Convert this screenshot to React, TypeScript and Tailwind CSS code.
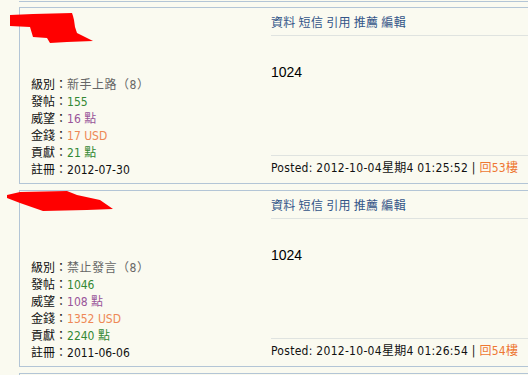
import React from "react";

type Post = {
  level: string;
  posts: string;
  fame: string;
  money: string;
  contrib: string;
  reg: string;
  time: string;
  floor: string;
  blob: string;
};

const posts: Post[] = [
  {
    level: "新手上路（8）",
    posts: "155",
    fame: "16 點",
    money: "17 USD",
    contrib: "21 點",
    reg: "2012-07-30",
    time: "2012-10-04星期4 01:25:52",
    floor: "回53樓",
    blob: "10,8 33,7 72,6 73,9 74,13 75,20 77,26 93,34 67,35 50,36 47,31 33,30 30,20 10,19",
  },
  {
    level: "禁止發言（8）",
    posts: "1046",
    fame: "108 點",
    money: "1352 USD",
    contrib: "2240 點",
    reg: "2011-06-06",
    time: "2012-10-04星期4 01:26:54",
    floor: "回54樓",
    blob: "7,5 20,2 67,1 77,5 100,10 113,19 87,20 43,21 20,13 7,8",
  },
];

const sans = {
  fontFamily: '"DejaVu Sans Condensed", "DejaVu Sans", "Noto Sans CJK TC", sans-serif',
};

function PostBox({ p }: { p: Post }) {
  return (
    <div className="relative ml-[19px] w-[540px] h-[177px] border border-[#b3c5d6] flex">
      <svg
        className="absolute left-[-20px] top-[-1px]"
        width="120"
        height="40"
        viewBox="0 0 120 40"
      >
        <polygon points={p.blob} fill="#ff0000" />
      </svg>
      <div className="w-[251px] pl-[11px] pb-[4px] flex flex-col justify-end text-[12px] leading-[17px] text-[#111]">
        <div>
          級別：<span className="text-[#666] tracking-[0.5px]">{p.level}</span>
        </div>
        <div>
          發帖：<span className="text-[#338833]">{p.posts}</span>
        </div>
        <div>
          威望：<span className="text-[#995599]">{p.fame}</span>
        </div>
        <div>
          金錢：<span className="text-[#ee8855]">{p.money}</span>
        </div>
        <div>
          貢獻：<span className="text-[#338833]">{p.contrib}</span>
        </div>
        <div>註冊：{p.reg}</div>
      </div>
      <div className="flex-1 flex flex-col">
        <div
          className="h-[28px] pt-[5px] border-b border-[#dfe3e0] text-[12px] leading-[17px] tracking-[0.3px] text-[#335588]"
          style={{ fontFamily: '"Noto Sans CJK TC", sans-serif' }}
        >
          資料 短信 引用 推薦 編輯
        </div>
        <div
          className="flex-1 pt-[28px] text-[14px] leading-[17px] text-black"
          style={{ fontFamily: '"Liberation Sans", Arial, sans-serif' }}
        >
          1024
        </div>
        <div className="h-[28px] pt-[4px] border-t border-[#dfe3e0] text-[12px] leading-[17px] tracking-[0.28px] text-[#111]">
          Posted: {p.time} | <span className="text-[#ee7733]">{p.floor}</span>
        </div>
      </div>
    </div>
  );
}

export default function App() {
  return (
    <div className="w-[528px] h-[375px] overflow-hidden bg-[#fafaf0]" style={sans}>
      <div className="ml-[19px] h-[2px] border-b border-[#b3c5d6] w-[540px]" />
      <div className="h-[5px]" />
      <div className="flex flex-col gap-[6px]">
        {posts.map((p, i) => (
          <PostBox key={i} p={p} />
        ))}
        <div className="ml-[19px] h-[20px] border border-[#b3c5d6] w-[540px]" />
      </div>
    </div>
  );
}
